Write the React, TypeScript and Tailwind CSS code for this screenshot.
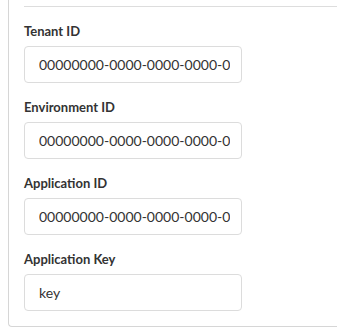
const fields = [
  { label: "Tenant ID", value: "00000000-0000-0000-0000-000000000000" },
  { label: "Environment ID", value: "00000000-0000-0000-0000-000000000000" },
  { label: "Application ID", value: "00000000-0000-0000-0000-000000000000" },
  { label: "Application Key", value: "key" },
];

export default function App() {
  return (
    <div className="w-[337px] h-[332px] bg-white overflow-hidden font-['Lato',sans-serif]">
      <div className="ml-[8px] w-[400px] h-[327px] border-l border-b border-[#d6d6d6] rounded-bl-[4px] pl-[15px] pt-[6px]">
        <div className="h-px bg-[#dddddd]" />
        <div className="pt-[15px] flex flex-col gap-[15px]">
          {fields.map((f) => (
            <div key={f.label} className="flex flex-col">
              <label className="text-[13px] leading-[18px] font-bold text-[#333333] mb-[6px]">
                {f.label}
              </label>
              <input
                readOnly
                value={f.value}
                className="w-[218px] h-[37px] border border-[#dcdcdc] rounded-[4px] pl-[14px] pr-[11px] text-[14px] text-[#333333] outline-none bg-white font-['Lato',sans-serif]"
              />
            </div>
          ))}
        </div>
      </div>
    </div>
  );
}
